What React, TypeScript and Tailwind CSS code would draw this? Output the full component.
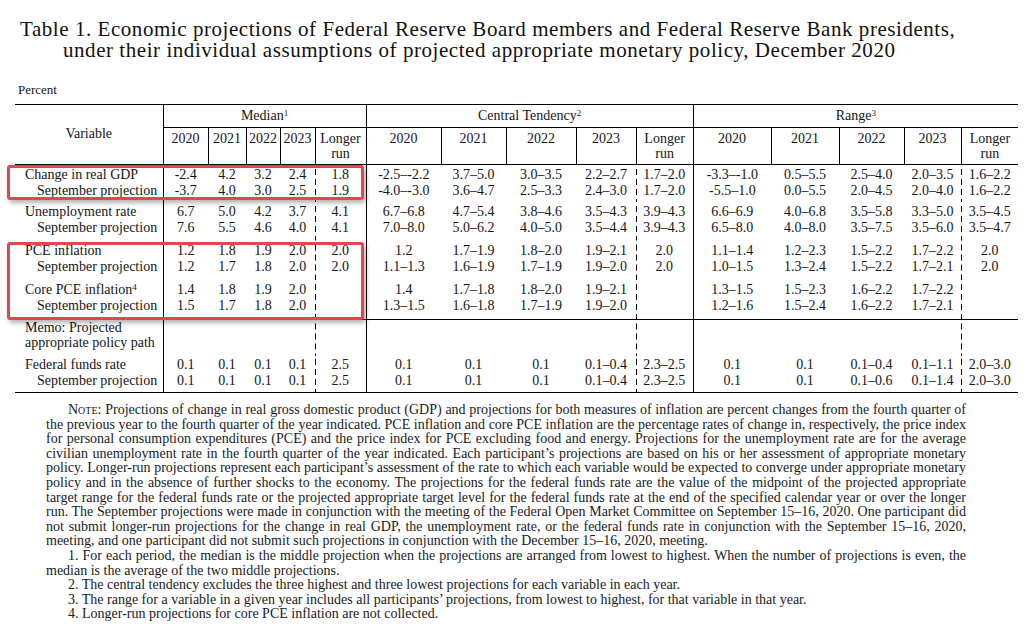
import React from 'react';

const dash = 'bg-[linear-gradient(#000_60%,transparent_60%)] bg-[length:1px_10px] bg-repeat-y bg-left';

type Group = { label: React.ReactNode; sub?: React.ReactNode; a: string[]; b: string[]; pt: string; pb: string; lh?: string };

const groups: Group[] = [
  {
    label: 'Change in real GDP',
    a: ['-2.4', '4.2', '3.2', '2.4', '1.8', '-2.5–-2.2', '3.7–5.0', '3.0–3.5', '2.2–2.7', '1.7–2.0', '-3.3–-1.0', '0.5–5.5', '2.5–4.0', '2.0–3.5', '1.6–2.2'],
    b: ['-3.7', '4.0', '3.0', '2.5', '1.9', '-4.0–-3.0', '3.6–4.7', '2.5–3.3', '2.4–3.0', '1.7–2.0', '-5.5–1.0', '0.0–5.5', '2.0–4.5', '2.0–4.0', '1.6–2.2'],
    pt: 'pt-[2px]', pb: 'pb-[3px]',
  },
  {
    label: 'Unemployment rate',
    a: ['6.7', '5.0', '4.2', '3.7', '4.1', '6.7–6.8', '4.7–5.4', '3.8–4.6', '3.5–4.3', '3.9–4.3', '6.6–6.9', '4.0–6.8', '3.5–5.8', '3.3–5.0', '3.5–4.5'],
    b: ['7.6', '5.5', '4.6', '4.0', '4.1', '7.0–8.0', '5.0–6.2', '4.0–5.0', '3.5–4.4', '3.9–4.3', '6.5–8.0', '4.0–8.0', '3.5–7.5', '3.5–6.0', '3.5–4.7'],
    pt: 'pt-[2px]', pb: 'pb-[4px]',
  },
  {
    label: 'PCE inflation',
    a: ['1.2', '1.8', '1.9', '2.0', '2.0', '1.2', '1.7–1.9', '1.8–2.0', '1.9–2.1', '2.0', '1.1–1.4', '1.2–2.3', '1.5–2.2', '1.7–2.2', '2.0'],
    b: ['1.2', '1.7', '1.8', '2.0', '2.0', '1.1–1.3', '1.6–1.9', '1.7–1.9', '1.9–2.0', '2.0', '1.0–1.5', '1.3–2.4', '1.5–2.2', '1.7–2.1', '2.0'],
    pt: 'pt-[3px]', pb: 'pb-[4px]',
  },
  {
    label: (
      <>
        Core PCE inflation<sup className="text-[9px]">4</sup>
      </>
    ),
    a: ['1.4', '1.8', '1.9', '2.0', '', '1.4', '1.7–1.8', '1.8–2.0', '1.9–2.1', '', '1.3–1.5', '1.5–2.3', '1.6–2.2', '1.7–2.2', ''],
    b: ['1.5', '1.7', '1.8', '2.0', '', '1.3–1.5', '1.6–1.8', '1.7–1.9', '1.9–2.0', '', '1.2–1.6', '1.5–2.4', '1.6–2.2', '1.7–2.1', ''],
    pt: 'pt-[3px]', pb: 'pb-[5px]',
  },
  {
    label: 'Memo: Projected',
    sub: 'appropriate policy path',
    a: Array(15).fill(''),
    b: Array(15).fill(''),
    pt: 'pt-0', pb: 'pb-[6px]', lh: 'leading-[15px]',
  },
  {
    label: 'Federal funds rate',
    a: ['0.1', '0.1', '0.1', '0.1', '2.5', '0.1', '0.1', '0.1', '0.1–0.4', '2.3–2.5', '0.1', '0.1', '0.1–0.4', '0.1–1.1', '2.0–3.0'],
    b: ['0.1', '0.1', '0.1', '0.1', '2.5', '0.1', '0.1', '0.1', '0.1–0.4', '2.3–2.5', '0.1', '0.1', '0.1–0.6', '0.1–1.4', '2.0–3.0'],
    pt: 'pt-px', pb: 'pb-[3px]',
  },
];

const colW = ['w-[148px]', 'w-[45px]', 'w-[38px]', 'w-[34px]', 'w-[35px]', 'w-[51px]', 'w-[75px]', 'w-[65px]', 'w-[70px]', 'w-[60px]', 'w-[57px]', 'w-[78px]', 'w-[68px]', 'w-[65px]', 'w-[57px]', 'w-[57px]'];

function cellCls(i: number) {
  if (i === 4 || i === 9) return `${dash} border-r border-black`;
  if (i === 14) return dash;
  return '';
}

const years = ['2020', '2021', '2022', '2023'];

function YearHeads({ last }: { last: boolean }) {
  return (
    <>
      {years.map((y) => (
        <th key={y} className="h-[37px] border-r border-b border-black pt-[3px] align-top font-normal leading-[15px]">
          {y}
        </th>
      ))}
      <th className={`h-[37px] border-b border-black pt-[3px] align-top font-normal leading-[15px] ${last ? '' : 'border-r'}`}>
        Longer
        <br />
        run
      </th>
    </>
  );
}

const notes: { t: React.ReactNode; indent?: boolean; last?: boolean }[] = [
  {
    t: (
      <>
        <span className="[font-variant:small-caps]">Note</span>: Projections of change in real gross domestic product (GDP) and projections for both measures of inflation are percent changes from the fourth quarter of
      </>
    ),
    indent: true,
  },
  { t: 'the previous year to the fourth quarter of the year indicated. PCE inflation and core PCE inflation are the percentage rates of change in, respectively, the price index' },
  { t: 'for personal consumption expenditures (PCE) and the price index for PCE excluding food and energy. Projections for the unemployment rate are for the average' },
  { t: 'civilian unemployment rate in the fourth quarter of the year indicated. Each participant’s projections are based on his or her assessment of appropriate monetary' },
  { t: 'policy. Longer-run projections represent each participant’s assessment of the rate to which each variable would be expected to converge under appropriate monetary' },
  { t: 'policy and in the absence of further shocks to the economy. The projections for the federal funds rate are the value of the midpoint of the projected appropriate' },
  { t: 'target range for the federal funds rate or the projected appropriate target level for the federal funds rate at the end of the specified calendar year or over the longer' },
  { t: 'run. The September projections were made in conjunction with the meeting of the Federal Open Market Committee on September 15–16, 2020. One participant did' },
  { t: 'not submit longer-run projections for the change in real GDP, the unemployment rate, or the federal funds rate in conjunction with the September 15–16, 2020,' },
  { t: 'meeting, and one participant did not submit such projections in conjunction with the December 15–16, 2020, meeting.', last: true },
  { t: '1. For each period, the median is the middle projection when the projections are arranged from lowest to highest. When the number of projections is even, the', indent: true },
  { t: 'median is the average of the two middle projections.', last: true },
  { t: '2. The central tendency excludes the three highest and three lowest projections for each variable in each year.', indent: true, last: true },
  { t: '3. The range for a variable in a given year includes all participants’ projections, from lowest to highest, for that variable in that year.', indent: true, last: true },
  { t: '4. Longer-run projections for core PCE inflation are not collected.', indent: true, last: true },
];

export default function App() {
  return (
    <div className="relative h-[626px] w-[1029px] overflow-hidden bg-white font-['Liberation_Serif',serif] text-[#151515]">
      {/* Title */}
      <div className="pt-[19px] text-[21px] leading-[21px] tracking-[0.55px] text-[#111]">
        <div className="pl-[20px] whitespace-nowrap">Table 1. Economic projections of Federal Reserve Board members and Federal Reserve Bank presidents,</div>
        <div className="pl-[63px] whitespace-nowrap">under their individual assumptions of projected appropriate monetary policy, December 2020</div>
      </div>

      <div className="mt-[21px] pl-[18px] text-[13px] leading-[16px]">Percent</div>

      {/* Table */}
      <table className="mt-[6px] ml-[15px] w-[1003px] table-fixed border-collapse border-t border-b border-black text-[14px]">
        <colgroup>
          {colW.map((w, i) => (
            <col key={i} className={w} />
          ))}
        </colgroup>
        <thead>
          <tr>
            <th rowSpan={2} className="border-r border-b border-black pb-[3px] align-middle font-normal">
              Variable
            </th>
            <th colSpan={5} className="h-[23px] border-r border-b border-black p-0 font-normal leading-[22px]">
              Median<sup className="text-[9px]">1</sup>
            </th>
            <th colSpan={5} className="h-[23px] border-r border-b border-black p-0 font-normal leading-[22px]">
              Central Tendency<sup className="text-[9px]">2</sup>
            </th>
            <th colSpan={5} className="h-[23px] border-b border-black p-0 font-normal leading-[22px]">
              Range<sup className="text-[9px]">3</sup>
            </th>
          </tr>
          <tr>
            <YearHeads last={false} />
            <YearHeads last={false} />
            <YearHeads last={true} />
          </tr>
        </thead>
        <tbody>
          {groups.map((g, gi) => {
            const lh = g.lh ?? 'leading-[16px]';
            const rowB = gi === 3 ? 'border-b border-black' : '';
            return (
              <tr key={gi} className={rowB}>
                <td className={`border-r border-black ${g.pt} ${g.pb} align-top ${lh} whitespace-nowrap`}>
                  <div className="pl-[10px]">{g.label}</div>
                  <div className={g.sub ? 'pl-[10px]' : 'pl-[22px]'}>{g.sub ?? 'September projection'}</div>
                </td>
                {g.a.map((v, i) => (
                  <td key={i} className={`${cellCls(i)} ${g.pt} ${g.pb} align-top text-center ${lh} whitespace-nowrap`}>
                    <div>{v || '\u00a0'}</div>
                    <div>{g.b[i] || '\u00a0'}</div>
                  </td>
                ))}
              </tr>
            );
          })}
        </tbody>
      </table>

      {/* Notes */}
      <div className="mt-[10px] ml-[46px] w-[920px] text-[14px] leading-[14.6px] text-[#1a1a1a]">
        {notes.map((n, i) => (
          <div key={i} className={`${n.indent ? 'pl-[22px]' : ''} ${n.last ? 'text-left' : 'text-justify [text-align-last:justify]'}`}>
            {n.t}
          </div>
        ))}
      </div>

      {/* Highlight boxes */}
      <div className="absolute top-[165px] left-[7px] h-[35px] w-[357px] rounded-[3px] border-[3px] border-[#e2474c] shadow-[2px_3px_5px_rgba(0,0,0,0.3)]" />
      <div className="absolute top-[242px] left-[7px] h-[78px] w-[357px] rounded-[3px] border-[3px] border-[#e2474c] shadow-[2px_3px_5px_rgba(0,0,0,0.3)]" />
    </div>
  );
}
